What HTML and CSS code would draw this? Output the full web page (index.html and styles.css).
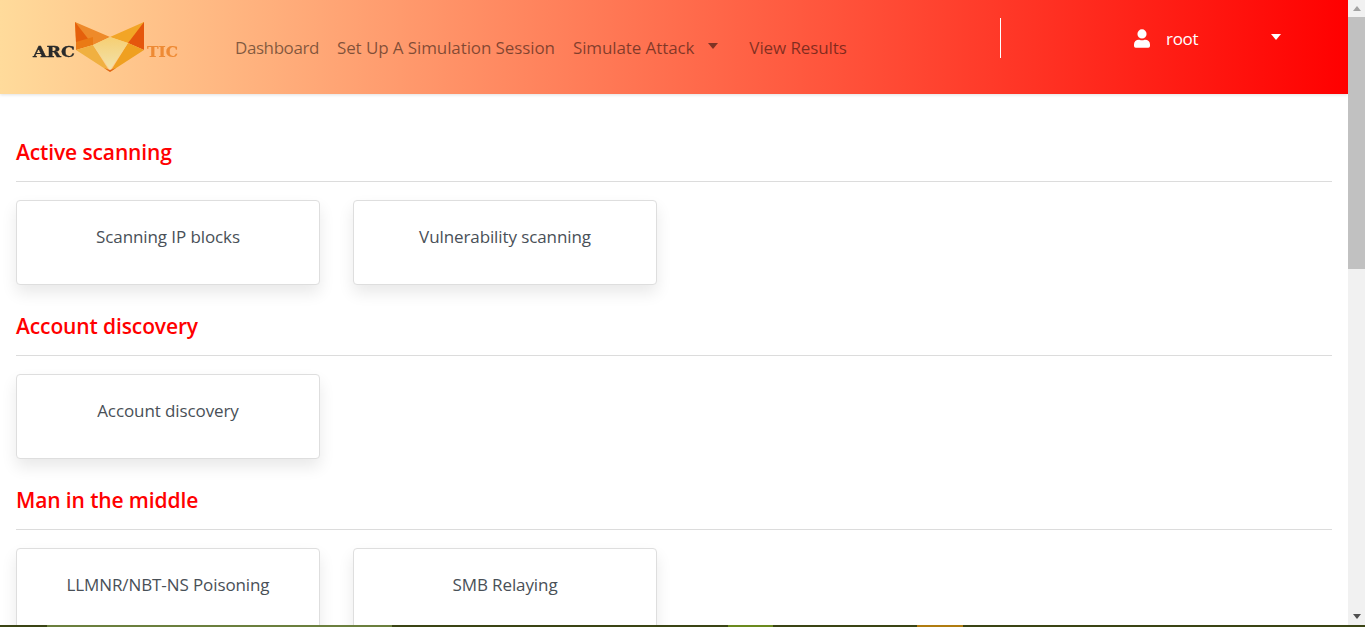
FILE: index.html
```html
<!DOCTYPE html>
<html lang="en">
<head>
<meta charset="utf-8">
<title>Arctic</title>
<link rel="stylesheet" href="styles.css">
</head>
<body>
<div class="window">
  <div class="viewport">
    <div class="page">
      <header class="navbar">
        <svg class="logo" width="160" height="60" viewBox="25 17 160 60" aria-label="Arctic logo">
          <defs>
            <linearGradient id="face" x1="0" y1="0" x2="0" y2="1">
              <stop offset="0" stop-color="#f6cf72"/>
              <stop offset="1" stop-color="#f2e2ac"/>
            </linearGradient>
          </defs>
          <text x="33" y="57" class="logo-dark" textLength="42" lengthAdjust="spacingAndGlyphs">ARC</text>
          <text x="147" y="57" class="logo-light" textLength="31" lengthAdjust="spacingAndGlyphs">TIC</text>
          <polygon points="75,22 110,37 93,45 76,42" fill="#ee8a2a"/>
          <polygon points="75,22 93,45 76,42" fill="#e5600c"/>
          <polygon points="144,22 110,37 128,43 144,42" fill="#f2a526"/>
          <polygon points="144,22 128,43 144,50" fill="#e5560c"/>
          <polygon points="76,42 93,37 93,45 76,50" fill="#ea7a14"/>
          <polygon points="76,50 93,45 110,72" fill="#f0b040"/>
          <polygon points="144,50 128,43 110,72" fill="#efa020"/>
          <polygon points="110,37 128,43 110,70 93,45" fill="url(#face)"/>
          <polygon points="104,68 110,72 116,68 110,70" fill="#e2651a"/>
        </svg>
        <nav class="nav-links">
          <a class="nav-link nav-tight">Dashboard</a>
          <a class="nav-link">Set Up A Simulation Session</a>
          <a class="nav-link nav-dropdown">Simulate Attack<span class="caret caret-muted"></span></a>
          <a class="nav-link">View Results</a>
        </nav>
        <div class="divider"></div>
        <div class="user">
          <svg class="user-icon" width="16" height="19" viewBox="0 0 448 512" aria-hidden="true">
            <path fill="#fff" d="M224 256a128 128 0 1 0 0-256 128 128 0 0 0 0 256zm89.600 32h-16.700a174.100 174.100 0 0 1-145.800 0h-16.700A134.400 134.400 0 0 0 0 422.400V464a48 48 0 0 0 48 48h352a48 48 0 0 0 48-48v-41.600A134.400 134.400 0 0 0 313.600 288z"/>
          </svg>
          <span class="user-name">root</span>
          <span class="caret caret-white"></span>
        </div>
      </header>
      <main class="content">
        <section class="group">
          <h2 class="group-title">Active scanning</h2>
          <div class="cards">
            <div class="card">Scanning IP blocks</div>
            <div class="card">Vulnerability scanning</div>
          </div>
        </section>
        <section class="group">
          <h2 class="group-title">Account discovery</h2>
          <div class="cards">
            <div class="card">Account discovery</div>
          </div>
        </section>
        <section class="group">
          <h2 class="group-title">Man in the middle</h2>
          <div class="cards">
            <div class="card">LLMNR/NBT-NS Poisoning</div>
            <div class="card">SMB Relaying</div>
          </div>
        </section>
      </main>
    </div>
    <div class="scrollbar">
      <span class="arrow arrow-up"></span>
      <div class="track"><div class="thumb"></div></div>
      <span class="arrow arrow-down"></span>
    </div>
  </div>
  <div class="taskbar">
    <span class="seg seg-a"></span>
    <span class="seg seg-b"></span>
    <span class="seg seg-c"></span>
    <span class="seg seg-d"></span>
    <span class="seg seg-e"></span>
    <span class="seg seg-f"></span>
    <span class="seg seg-g"></span>
  </div>
</div>
</body>
</html>
```
FILE: styles.css
```css
* { box-sizing: border-box; }
html, body { margin: 0; padding: 0; height: 100%; overflow: hidden; }
body { font-family: "Open Sans", "Noto Sans", sans-serif; background: #fff; color: #495057; }

.window { display: flex; flex-direction: column; height: 627px; width: 1365px; }
.viewport { display: flex; height: 625px; flex: none; }
.page { width: 1348px; flex: none; overflow: hidden; }

.navbar {
  display: flex; align-items: center; height: 94px;
  background: linear-gradient(to right, #ffdb9b, #ff0000);
  box-shadow: 0 1px 3px rgba(0,0,0,.12);
  padding-left: 25px;
  position: relative;
}
.logo { flex: none; display: block; margin-right: 50px; filter: blur(.35px); }
.logo-dark { font-family: "DejaVu Serif", serif; font-weight: 700; font-size: 14px; fill: #2a2a2a; stroke: #2a2a2a; stroke-width: .3px; }
.logo-light { font-family: "DejaVu Serif", serif; font-weight: 700; font-size: 14px; fill: #ee8a34; stroke: #ee8a34; stroke-width: .2px; }

.nav-links { display: flex; align-items: center; width: 766px; flex: none; }
.nav-link { font-size: 17px; letter-spacing: -.1px; color: rgba(0,0,0,.5); margin-right: 18px; white-space: nowrap; }
.nav-tight { letter-spacing: -.42px; }
.nav-dropdown { margin-right: 31px; display: flex; align-items: center; }

.caret { display: block; width: 0; height: 0; border-left: 5px solid transparent; border-right: 5px solid transparent; }
.caret-muted { border-top: 6px solid rgba(0,0,0,.5); margin-left: 14px; margin-top: -2px; }
.caret-white { border-top: 6px solid #fff; margin-left: 73px; margin-top: -3px; }

.divider { width: 1px; height: 40px; background: #fff; flex: none; margin-left: -1px; align-self: flex-start; margin-top: 18px; }
.user { display: flex; align-items: center; margin-left: 133px; margin-top: -18px; color: #fff; }
.user-icon { display: block; flex: none; }
.user-name { font-size: 17px; letter-spacing: -.3px; margin-left: 16px; width: 32px; }

.content { padding: 40px 16px 0; }
.group { height: 174px; }
.group-title {
  margin: 0; height: 48px; padding-bottom: 12px;
  font-size: 21px; font-weight: 600; letter-spacing: -.12px; line-height: 37px;
  color: #f00; border-bottom: 1px solid #dcdcdc;
}
.cards { display: flex; gap: 33px; padding-top: 18px; }
.card {
  width: 304px; height: 85px; flex: none;
  padding-top: 24px; text-align: center;
  font-size: 17px; letter-spacing: -.1px; line-height: 24px; color: #495057;
  background: #fff; border: 1px solid #dedede; border-radius: 4px;
  box-shadow: 0 8px 16px rgba(0,0,0,.09);
}

.scrollbar { width: 17px; flex: none; background: #f1f1f1; display: flex; flex-direction: column; align-items: center; }
.track { flex: 1; width: 100%; }
.thumb { height: 252px; background: #c1c1c1; }
.arrow { display: block; flex: none; width: 0; height: 0; border-left: 4px solid transparent; border-right: 4px solid transparent; margin: 6px 0 6px; }
.arrow-up { border-bottom: 5px solid #a3a3a3; }
.arrow-down { border-top: 5px solid #505050; }

.taskbar { display: flex; height: 2px; flex: none; background: #3a4414; }
.seg { display: block; height: 2px; }
.seg-a { width: 47px; }
.seg-b { width: 345px; background: #6b7f3e; }
.seg-c { width: 336px; }
.seg-d { width: 45px; background: #6b8a1e; }
.seg-e { width: 144px; }
.seg-f { width: 46px; background: #b07c10; }
.seg-g { flex: 1; }
```
